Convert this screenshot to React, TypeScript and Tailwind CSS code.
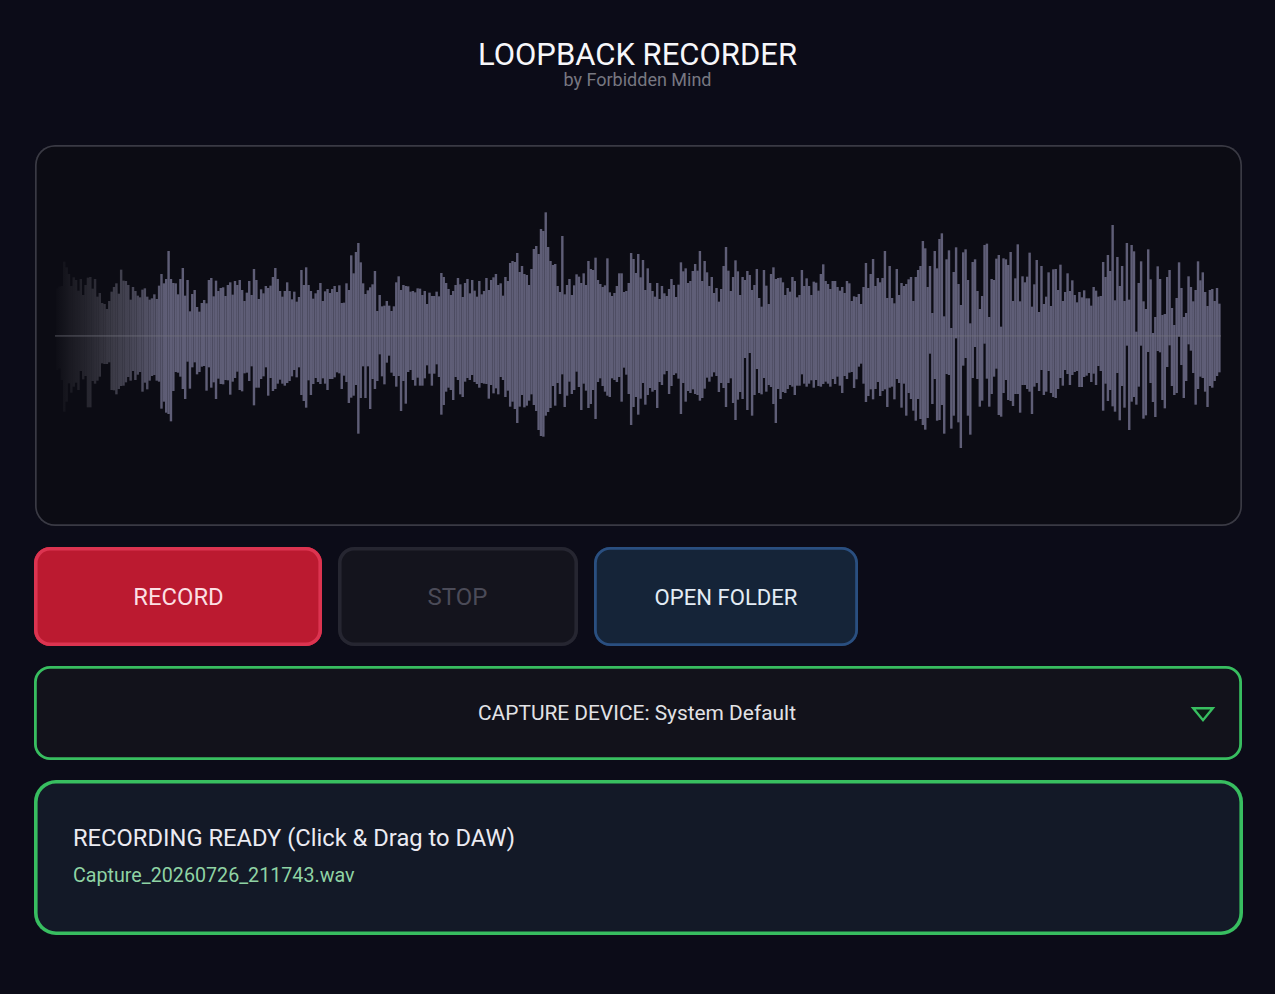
import React from "react";

// Peak envelope: one entry per bar, distances in thirds of a pixel from the top of the plot.
const TOPS = [
  265, 260, 258, 185, 202, 222, 258, 232, 240, 272, 237, 285, 255, 233, 231, 266, 237, 290, 279, 309,
  312, 327, 303, 275, 261, 250, 281, 209, 242, 243, 255, 299, 261, 273, 287, 292, 269, 265, 290, 299,
  295, 283, 297, 257, 222, 250, 237, 153, 237, 249, 250, 283, 237, 204, 287, 240, 334, 282, 270, 321,
  335, 309, 300, 310, 240, 234, 289, 242, 273, 264, 262, 288, 255, 247, 284, 243, 255, 240, 270, 303,
  278, 243, 285, 207, 240, 297, 268, 280, 258, 264, 257, 231, 204, 237, 273, 290, 273, 247, 273, 298,
  275, 305, 291, 210, 255, 202, 255, 273, 296, 280, 270, 249, 303, 274, 267, 279, 267, 258, 276, 256,
  309, 308, 250, 270, 166, 220, 156, 129, 187, 250, 282, 271, 262, 253, 213, 333, 285, 319, 317, 303,
  317, 333, 319, 247, 229, 270, 255, 258, 259, 275, 273, 277, 265, 266, 285, 273, 312, 278, 288, 288,
  275, 289, 219, 231, 249, 267, 285, 273, 255, 234, 253, 291, 249, 237, 280, 240, 272, 290, 243, 283,
  273, 234, 270, 240, 232, 222, 255, 250, 287, 231, 243, 189, 183, 186, 159, 216, 198, 222, 225, 255,
  207, 147, 138, 162, 87, 93, 37, 141, 183, 195, 192, 258, 276, 108, 283, 255, 237, 285, 256, 223,
  230, 249, 220, 255, 183, 207, 210, 173, 240, 252, 261, 256, 175, 277, 288, 279, 258, 220, 220, 276,
  273, 249, 159, 177, 219, 162, 232, 180, 270, 205, 249, 273, 290, 249, 297, 258, 280, 288, 267, 237,
  255, 291, 254, 187, 214, 205, 249, 243, 213, 192, 212, 153, 243, 183, 217, 258, 231, 279, 264, 305,
  267, 198, 141, 212, 273, 231, 181, 214, 285, 231, 240, 213, 225, 270, 255, 207, 294, 320, 210, 257,
  312, 222, 202, 237, 234, 233, 247, 285, 264, 275, 231, 243, 292, 285, 210, 258, 235, 258, 285, 245,
  248, 272, 222, 193, 243, 252, 267, 243, 243, 261, 272, 261, 279, 243, 250, 303, 289, 291, 282, 312,
  261, 189, 264, 222, 177, 258, 234, 247, 234, 153, 294, 198, 294, 310, 207, 285, 249, 258, 252, 238,
  231, 303, 231, 210, 198, 123, 145, 261, 198, 339, 153, 205, 117, 100, 349, 178, 151, 384, 216, 142,
  252, 315, 157, 148, 240, 370, 186, 178, 273, 327, 288, 135, 131, 351, 237, 240, 176, 165, 380, 175,
  178, 195, 156, 303, 235, 133, 304, 229, 247, 230, 158, 320, 253, 180, 336, 198, 312, 290, 217, 318,
  208, 207, 270, 194, 303, 276, 220, 273, 241, 285, 307, 276, 292, 271, 295, 295, 317, 261, 272, 290,
  288, 186, 231, 165, 213, 75, 301, 171, 258, 198, 303, 129, 299, 135, 154, 395, 249, 184, 304, 327,
  148, 238, 399, 351, 199, 237, 345, 342, 231, 210, 324, 375, 294, 187, 264, 351, 339, 229, 261, 304,
  270, 184, 241, 217, 276, 318, 270, 267, 303, 264, 311,
];

const BOTTOMS = [
  510, 505, 540, 635, 605, 550, 578, 560, 548, 570, 513, 538, 528, 622, 622, 543, 551, 542, 530, 490,
  492, 492, 487, 570, 571, 583, 567, 558, 557, 547, 531, 542, 513, 540, 524, 516, 575, 548, 568, 542,
  528, 525, 542, 545, 626, 605, 638, 642, 664, 573, 516, 518, 530, 567, 597, 485, 566, 502, 487, 523,
  516, 500, 498, 572, 502, 563, 547, 597, 536, 552, 553, 540, 541, 584, 545, 534, 515, 570, 574, 520,
  518, 543, 499, 616, 563, 563, 537, 529, 502, 587, 534, 573, 567, 551, 539, 551, 557, 549, 543, 529,
  510, 532, 502, 585, 603, 623, 541, 585, 552, 534, 546, 552, 535, 551, 570, 537, 537, 532, 517, 520,
  567, 527, 546, 609, 593, 587, 555, 701, 594, 499, 594, 499, 627, 537, 567, 543, 463, 529, 553, 488,
  467, 518, 528, 560, 528, 633, 543, 611, 516, 510, 540, 557, 533, 557, 557, 535, 496, 521, 557, 521,
  493, 531, 644, 615, 575, 563, 570, 600, 531, 540, 583, 591, 545, 534, 540, 525, 546, 552, 563, 549,
  551, 552, 596, 555, 580, 565, 583, 531, 540, 591, 572, 620, 605, 627, 669, 620, 585, 622, 617, 602,
  583, 615, 633, 690, 708, 710, 647, 636, 624, 558, 617, 549, 582, 523, 621, 587, 545, 582, 570, 515,
  561, 630, 551, 572, 624, 612, 570, 657, 546, 535, 558, 575, 587, 591, 535, 540, 546, 531, 605, 503,
  524, 582, 675, 621, 591, 644, 596, 549, 614, 585, 564, 575, 570, 624, 546, 555, 523, 513, 582, 558,
  525, 520, 536, 642, 549, 605, 573, 579, 568, 582, 585, 602, 594, 566, 533, 545, 530, 517, 528, 576,
  549, 564, 621, 549, 535, 609, 660, 599, 576, 597, 474, 630, 459, 647, 585, 507, 579, 583, 534, 575,
  555, 561, 612, 669, 567, 597, 576, 579, 567, 555, 560, 585, 557, 557, 523, 551, 560, 551, 541, 563,
  540, 558, 560, 552, 545, 551, 560, 537, 552, 530, 557, 579, 528, 537, 518, 516, 564, 538, 500, 491,
  551, 606, 588, 568, 598, 567, 546, 588, 573, 568, 621, 563, 560, 598, 537, 549, 623, 551, 647, 579,
  597, 632, 662, 597, 657, 675, 689, 654, 461, 612, 537, 662, 660, 615, 701, 522, 525, 686, 647, 415,
  667, 744, 497, 474, 647, 704, 534, 441, 537, 620, 602, 431, 536, 620, 582, 530, 506, 645, 650, 579,
  540, 600, 603, 618, 582, 582, 638, 555, 555, 567, 575, 642, 560, 549, 573, 510, 585, 575, 513, 579,
  591, 594, 567, 534, 557, 510, 522, 555, 525, 516, 513, 561, 561, 531, 527, 519, 546, 521, 555, 498,
  513, 632, 551, 603, 570, 619, 635, 519, 661, 558, 623, 437, 690, 605, 591, 614, 560, 437, 656, 646,
  456, 549, 606, 651, 453, 457, 600, 625, 501, 436, 558, 585, 579, 410, 495, 594, 543, 433, 452, 519,
  614, 567, 530, 534, 575, 621, 558, 563, 543, 528, 517,
];

const PITCH = 2.372;
const FIRST = 22.1;

function Waveform() {
  return (
    <svg className="block" width="1207" height="381" viewBox="0 0 1207 381" aria-hidden="true">
      <defs>
        <linearGradient id="fade" gradientUnits="userSpaceOnUse" x1="20" y1="0" x2="132" y2="0">
          <stop offset="0" stopColor="#38373d" stopOpacity="0.02" />
          <stop offset="0.14" stopColor="#3c3b43" stopOpacity="0.3" />
          <stop offset="0.5" stopColor="#4a4956" stopOpacity="0.75" />
          <stop offset="1" stopColor="#5f5e77" />
        </linearGradient>
      </defs>
      <g fill="url(#fade)">
        {TOPS.map((top, i) => (
          <rect
            key={i}
            x={FIRST + i * PITCH - 1.2}
            y={55 + top / 3}
            width={2.4}
            height={(BOTTOMS[i] - top) / 3}
          />
        ))}
      </g>
      <rect x="20" y="190" width="1166" height="1.8" fill="#74747f" fillOpacity="0.38" />
    </svg>
  );
}

export default function App() {
  return (
    <main className="flex h-[994px] w-[1275px] flex-col bg-[#0c0c18] pl-[34px] pr-[33px] font-['Roboto',sans-serif]">
      <header className="flex h-[145px] flex-col items-center pt-[38px] pr-px">
        <h1 className="text-[31px] leading-[33px] text-[#f7f7fa]">LOOPBACK RECORDER</h1>
        <p className="text-[18px] leading-[18px] text-[#777781]">by Forbidden Mind</p>
      </header>

      <section className="ml-[1px] h-[381px] w-[1207px] overflow-hidden rounded-[20px] bg-[#0c0c14] shadow-[inset_0_0_0_1.7px_#3a3a44]">
        <Waveform />
      </section>

      <div className="mt-[21px] flex h-[99px] gap-4">
        <button className="w-[288px] rounded-[16px] bg-[#bb1a30] pl-px pt-[2px] text-[23.8px] text-[#fbdfe3] shadow-[inset_0_0_0_3.6px_#dc3450]">
          RECORD
        </button>
        <button className="w-[240px] rounded-[16px] bg-[#14141d] pr-px text-[24px] text-[#4b4b58] shadow-[inset_0_0_0_3.6px_#262631]">
          STOP
        </button>
        <button className="w-[264px] rounded-[16px] bg-[#152438] pt-[2px] text-[22.1px] text-[#e3ecf5] shadow-[inset_0_0_0_2.8px_#2a4f80]">
          OPEN FOLDER
        </button>
      </div>

      <button className="relative mt-5 h-[94px] w-[1208px] rounded-[16px] bg-[#12121b] pt-[2px] pr-[2px] text-[20.9px] text-[#e2e2e6] shadow-[inset_0_0_0_2.8px_#38be60]">
        CAPTURE DEVICE: System Default
        <svg className="absolute right-[26px] top-[40px]" width="26" height="18" viewBox="0 0 26 18" fill="none">
          <path d="M3.2 2.3H22.8L13 14.2Z" fill="#0b1a14" stroke="#38be60" strokeWidth="2.4" />
        </svg>
      </button>

      <section className="mt-5 flex h-[155px] w-[1209px] flex-col rounded-[22px] bg-[#131927] pl-[39px] pt-[43px] shadow-[inset_0_0_0_3.6px_#38be60]">
        <h2 className="text-[23.72px] leading-[30px] text-[#ebebf2]">RECORDING READY (Click &amp; Drag to DAW)</h2>
        <p className="mt-[9px] text-[19.7px] leading-[28px] text-[#8fd3a4]">Capture_20260726_211743.wav</p>
      </section>
    </main>
  );
}
